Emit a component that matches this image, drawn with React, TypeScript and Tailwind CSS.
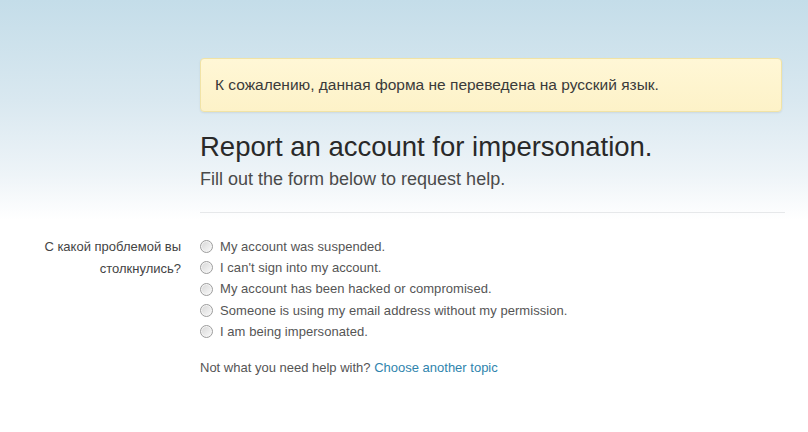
import React from 'react';

const OPTIONS = [
  'My account was suspended.',
  "I can't sign into my account.",
  'My account has been hacked or compromised.',
  'Someone is using my email address without my permission.',
  'I am being impersonated.',
];

function Radio() {
  return (
    <span className="flex h-[13px] w-[13px] shrink-0 items-center justify-center rounded-full border border-[#9d9d9d] bg-[#f4f4f4]">
      <span className="h-[9px] w-[9px] rounded-full bg-[linear-gradient(135deg,#d9d9d9,#f7f7f7)]" />
    </span>
  );
}

export default function App() {
  return (
    <div className="h-[432px] w-[808px] overflow-hidden bg-[linear-gradient(to_bottom,#c4dde9_0px,#d9e8f0_100px,#eef4f8_175px,#ffffff_220px)] font-['Liberation_Sans',Arial,sans-serif] text-[#333]">
      <div className="pl-[200px] pr-[26px] pt-[58px]">
        {/* Notice */}
        <div className="flex h-[54px] items-center rounded-[4px] border border-[#f1e3a6] bg-[linear-gradient(to_bottom,#fff7d6,#fdf2c8)] px-[14px] text-[15.5px] text-[#3a3a3a] shadow-[0_1px_2px_rgba(0,0,0,0.08)]">
          К сожалению, данная форма не переведена на русский язык.
        </div>

        {/* Heading */}
        <h1 className="mt-[17px] text-[27.5px] leading-[36px] text-[#292929]">Report an account for impersonation.</h1>
        <p className="mt-[3px] text-[18px] leading-[22px] text-[#4a4a4a]">Fill out the form below to request help.</p>
        <div className="mt-[22px] mr-[-3px] h-px bg-[#e6e8ea]" />
      </div>

      {/* Form */}
      <div className="mt-[22px] flex">
        <div className="w-[200px] pr-[19px] pt-[1px] text-right text-[13px] leading-[22px] text-[#444]">
          С какой проблемой вы
          <br />
          столкнулись?
        </div>
        <div className="flex flex-col pt-[1px]">
          {OPTIONS.map((o) => (
            <label key={o} className="flex h-[21.25px] items-center gap-[7px] text-[13px] tracking-[0.05px] text-[#555]">
              <Radio />
              <span>{o}</span>
            </label>
          ))}
          <p className="mt-[16px] text-[13px] text-[#555]">
            Not what you need help with? <a className="text-[#2f84ad]">Choose another topic</a>
          </p>
        </div>
      </div>
    </div>
  );
}
